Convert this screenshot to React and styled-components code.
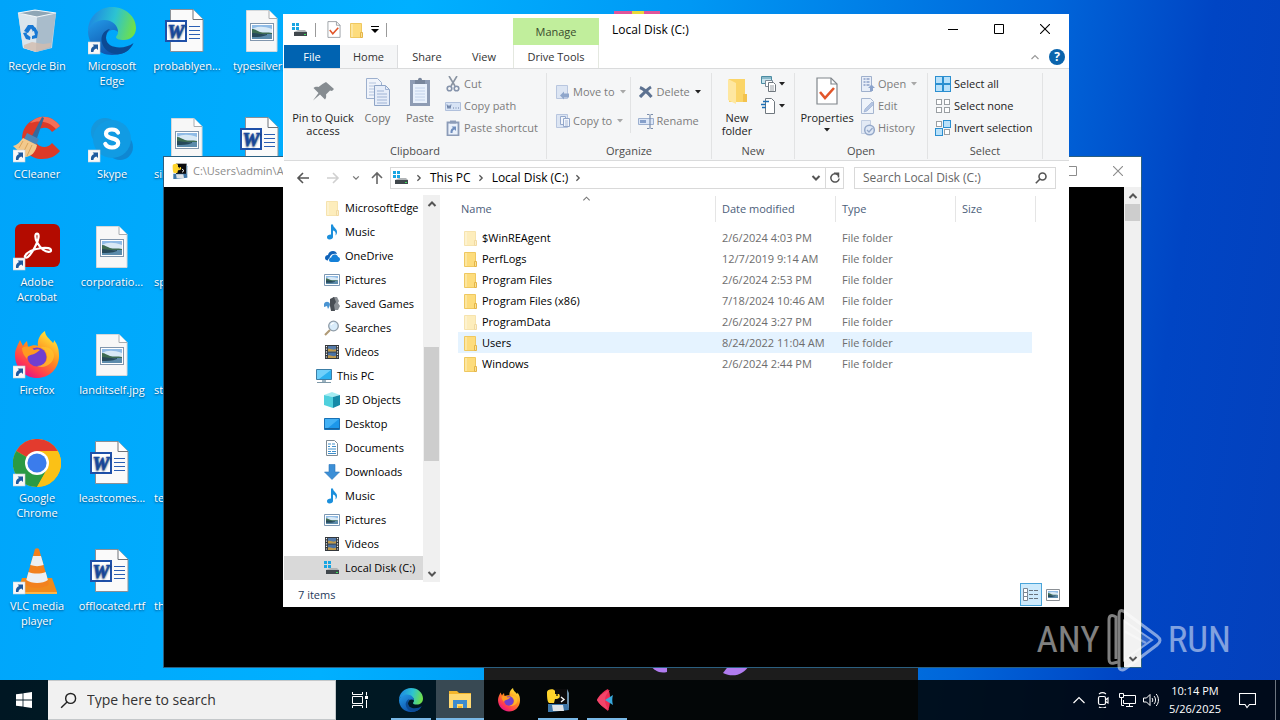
import React from "react";
import styled, { createGlobalStyle, css } from "styled-components";

const GlobalStyle = createGlobalStyle`
  *, *::before, *::after { box-sizing: border-box; }
  body {
    margin: 0;
    font-family: "Open Sans", "Noto Sans", sans-serif;
    font-size: 11px;
    line-height: 16px;
    color: #000;
  }
  button, input {
    font: inherit;
    color: inherit;
    border: 0;
    padding: 0;
    margin: 0;
    background: none;
    border-radius: 0;
  }
  svg { display: block; flex: none; }
`;

/* ---------- icons ---------- */

const Svg = ({ w = 16, h = w, box, children }) => (
  <svg width={w} height={h} viewBox={box || `0 0 ${w} ${h}`} fill="none" aria-hidden="true">
    {children}
  </svg>
);

const ShortcutBadge = () => (
  <g>
    <rect x="0" y="35" width="12" height="12" fill="#f8f8f8" stroke="#c8d0d8" strokeWidth=".6" />
    <path d="M3 45c-.4-3 .5-5 3-6l-1.400-1.600H10v5.600l-1.600-1.600C6.600 42 5.600 43 5.400 45z" fill="#1f5a9e" />
  </g>
);

const RecycleBinIcon = () => (
  <Svg w={48}>
    <path d="M5 6 22 3l21 3-4 35-16 4-13-4z" fill="#c3d3df" />
    <path d="M5 6l19 4-1 35-13-4z" fill="#dbe5ec" />
    <path d="M24 10l19-4-5 35-15 4z" fill="#a9bccb" />
    <path d="M5 6 22 3l21 3-19 4z" fill="#8fa6b6" stroke="#f2f6f9" strokeWidth="1.200" />
    <path d="M11 38l8-3 11 2 8-1-1 4-14 5-12-4z" fill="#d2bcae" opacity=".8" />
    <g fill="#1778d4">
      <path d="m11 24 4-6h5l3 4-3 2-2-2.500-3 4.500z" />
      <path d="m22 20 3 5-1 6-5 1 0-3 3-1-1-4-2 .5z" />
      <path d="m17 33-4-1-3-6 5-1-1.500 2 4 3z" />
    </g>
  </Svg>
);

const EdgeMark = () => (
  <g>
    <defs>
      <linearGradient id="edgeTop" x1="4" y1="10" x2="46" y2="22" gradientUnits="userSpaceOnUse">
        <stop stopColor="#1f8ee0" /><stop offset=".5" stopColor="#2cc3d2" /><stop offset="1" stopColor="#6fe04a" />
      </linearGradient>
      <linearGradient id="edgeLow" x1="4" y1="16" x2="20" y2="46" gradientUnits="userSpaceOnUse">
        <stop stopColor="#2193e2" /><stop offset="1" stopColor="#0f56ae" />
      </linearGradient>
    </defs>
    <path d="M0 24C0 10 11 0 24 0c14 0 24 10 24 21 0 8-6 12-12 12-5 0-8-1-8-3 0-1 2-2 2-5 0-5-5-10-13-10C9 15 2 18 0 24z" fill="url(#edgeTop)" />
    <path d="M0 24c2-6 8-11 16-11 9 0 14 6 14 12-4-4-12-2-12 6 0 8 7 12 14 12 5 0 9-2 12-5-4 7-11 10-20 10C10 48 0 37 0 24z" fill="url(#edgeLow)" />
    <path d="M18 31c0-4 1.500-7 4-9-6 1-10 7-8 14 2 7 9 12 18 11 6-1 11-5 13.500-11-9 7-27 6-27.500-5z" fill="#0b4a94" />
  </g>
);

const EdgeIcon = ({ size = 48, shortcut }) => (
  <Svg w={size} box="0 0 48 48"><EdgeMark />{shortcut && <ShortcutBadge />}</Svg>
);

const FirefoxIcon = ({ size = 48, shortcut }) => (
  <Svg w={size} box="0 0 48 48">
    <defs>
      <linearGradient id="fox" x1="40" y1="4" x2="12" y2="44" gradientUnits="userSpaceOnUse">
        <stop stopColor="#ffe83a" /><stop offset=".45" stopColor="#ff8a1e" /><stop offset=".8" stopColor="#ff3a52" /><stop offset="1" stopColor="#e31587" />
      </linearGradient>
    </defs>
    <path d="M2 24C2 18 5 14 7 9l3 6c1-2 2-3 4-5l1 6c4-2 8-2 10-1-1-6 2-12 7-15 0 5 5 8 8 12 1-1 1-2 1-3 4 5 5 10 5 16 0 13-10 22-22 22S2 37 2 24z" fill="url(#fox)" />
    <circle cx="24" cy="26" r="9.500" fill="#6f3fd0" />
    <path d="M9 17c5-3 9-1 12 2 3-1 5-1 6 0-2 1-3 3-6 4-4 1-7 2-7 5-3-3-5-7-5-11z" fill="#ff9a20" />
    <path d="M27 16c5 2 8 6 7 12-1 4-5 7-10 7 8 3 16-2 17-10 0-6-5-10-14-9z" fill="#ffc52e" opacity=".7" />
    {shortcut && <ShortcutBadge />}
  </Svg>
);

const CCleanerIcon = () => (
  <Svg w={48}>
    <path d="M47 11C41 3 32 0 24 3 14 7 9 14 9 24c0 12 9 20 20 20 8 0 14-3 18-8l-8-8c-3 4-8 5-12 3-4-2-5-6-5-9 0-6 4-9 8-9 4-1 7 1 9 4z" fill="#dc3a27" />
    <path d="M24 3c8-3 17 0 23 8l-4 3C36 6 26 5 17 8c2-2 4-4 7-5z" fill="#f37058" />
    <path d="m29 2 2 1-8 23-5-3z" fill="#35699b" />
    <path d="m14 18 12 6-3 6-12-6z" fill="#4b86b8" />
    <path d="M10 23l14 7c-1 7-6 12-12 12L0 31c4-1 7-4 10-8z" fill="#f2c98c" />
    <path d="m10 26-4 7m9-5-5 10m9-8-5 11" stroke="#d8a45c" />
    <ShortcutBadge />
  </Svg>
);

const SkypeIcon = () => (
  <Svg w={48}>
    <circle cx="17" cy="17" r="14" fill="#1597dc" />
    <circle cx="32" cy="32" r="13" fill="#0f87d2" />
    <circle cx="24" cy="24" r="19" fill="#119be3" />
    <path d="M30 17.500c-1-2.200-3.500-3-6-3-3.500 0-6 1.500-6 4.300 0 6.200 12.200 3 12.200 9.200 0 2.900-2.700 4.500-6.200 4.500-3 0-5.600-1.200-6.700-3.600" stroke="#fff" strokeWidth="4.200" strokeLinecap="round" />
    <ShortcutBadge />
  </Svg>
);

const AcrobatIcon = () => (
  <Svg w={48}>
    <rect x="2" y="1" width="45" height="43" rx="6" fill="#b30b00" />
    <path d="M12 33c2-4 9-7 17-8 5-.6 9 .3 9 2.400 0 2.200-4 2.200-8-.8-5-4-8-10-7.600-14 .3-2.600 3-2.600 3.200.2.400 5-6.600 18-10.600 21-1.800 1.300-3.700.8-3-.8z" stroke="#fff" strokeWidth="2.200" strokeLinejoin="round" />
    <ShortcutBadge />
  </Svg>
);

const ChromeIcon = () => (
  <Svg w={48}>
    <circle cx="24" cy="24" r="24" fill="#fbc116" />
    <path d="M24 24 3.200 12A24 24 0 0 1 44.800 12z" fill="#e33b2e" />
    <path d="M24 24 3.200 12A24 24 0 0 0 24 48l10-18z" fill="#2a9a44" />
    <path d="M24 12h20.800A24 24 0 0 1 24 48l10.400-18z" fill="#fbc116" />
    <circle cx="24" cy="24" r="12" fill="#fff" />
    <circle cx="24" cy="24" r="9.600" fill="#3b7cec" />
    <ShortcutBadge />
  </Svg>
);

const VlcIcon = () => (
  <Svg w={48}>
    <path d="M9 31h30l5 14c0 1-1 2-2 2H6c-1 0-2-1-2-2z" fill="#f08a1c" />
    <path d="M4 45h40v2H4z" fill="#ffb545" />
    <path d="M22 2c1-1 3-1 4 0l10 35c-4 5-20 5-24 0z" fill="#f2811d" />
    <path d="m20 9 8 0 2.600 9c-4 1.500-9 1.500-13.200 0zM15.500 25c5 2 12 2 17.200 0l2.200 8c-5 4-16.500 4-21.600 0z" fill="#eceff2" />
    <ShortcutBadge />
  </Svg>
);

const WordDocIcon = () => (
  <Svg w={48}>
    <path d="M7.500 2.500H30l10 10v32H7.500z" fill="#fafafa" stroke="#8c9096" />
    <path d="M30 2.500v10h10" fill="#fff" stroke="#6f7378" />
    <path d="M26 19.500h11M26 23.500h11M26 27.500h11M26 31.500h11" stroke="#2b5fb4" />
    <rect x="3" y="14" width="20" height="20" fill="#fff" stroke="#1f50a8" strokeWidth="2" />
    <text x="13" y="31" textAnchor="middle" fill="#1f50a8" stroke="#1f50a8" strokeWidth=".6" fontSize="19" fontWeight="700" fontStyle="italic" fontFamily="Liberation Serif, serif">W</text>
  </Svg>
);

const Landscape = ({ x, y, w, h }) => (
  <svg x={x} y={y} width={w} height={h} viewBox="0 0 20 14" preserveAspectRatio="none">
    <rect width="20" height="14" fill="#8fbbe6" />
    <path d="M0 4c5-3 12-3 20 0v4H0z" fill="#d8e9f6" />
    <path d="M0 4c3 0 5 2 8 3s8 0 12 1v1H0z" fill="#3d6b52" />
    <path d="M0 9h20v5H0z" fill="#5c8bab" />
    <path d="M0 8c5 0 10 2 15 1v1c-5 2-10 2-15 2z" fill="#27495a" />
  </svg>
);

const ImageDocIcon = () => (
  <Svg w={48}>
    <path d="M8.500 3.500H31l8 8v33H8.500z" fill="#f7f7f7" stroke="#d4d8db" />
    <path d="M31 3.500v8h8" fill="#fff" stroke="#a8acb0" />
    <rect x="12.500" y="16.500" width="23" height="17" fill="#fff" stroke="#8196ad" />
    <Landscape x={14} y={18} w={20} h={14} />
  </Svg>
);

const DriveIcon = () => (
  <Svg>
    <path d="M0 1h3v3H0zM4 1h3v3H4zM0 5h3v3H0zM4 5h3v3H4z" fill="#18a5e2" />
    <path d="m4 9 2-1h7l2 2H2z" fill="#b0b4b6" />
    <path d="M2 10h13v4H2z" fill="#40474c" />
    <path d="M12 12h2v1h-2z" fill="#39e05a" />
  </Svg>
);

const FolderIcon = ({ faded }) => (
  <Svg>
    <g opacity={faded ? 0.5 : 1}>
      <path d="M2.500 1.500h11v14h-11z" fill="#fddc7c" stroke="#efc860" />
      <path d="M3 2h2v13H3z" fill="#fce6a0" />
      <path d="M12.500 10.500h2v5h-2z" fill="#fbe294" stroke="#e5b548" />
    </g>
  </Svg>
);

const CheckDocIcon = ({ w = 14, h = 17 }) => (
  <Svg w={w} h={h} box="0 0 22 28">
    <path d="M1 1h14l6 6v20H1z" fill="#fff" stroke="#80868c" strokeWidth="1.200" />
    <path d="M15 1v6h6" stroke="#80868c" strokeWidth="1.200" />
    <path d="m4 15 5 6 9-10" stroke="#e2552a" strokeWidth="2.600" />
  </Svg>
);

const PinIcon = () => (
  <Svg w={24} h={28}>
    <path d="m15 5 8 7-2 2-2-.5-4 4c.5 2 0 4-1 5l-5-5-7 6 5.500-7.500-5-5c1-1 3-1.500 5-1l4-3z" fill="#868c91" />
  </Svg>
);

const CopyIcon = () => (
  <Svg w={26} h={30}>
    <path d="M1.500 1.500h11l4 4v16h-15z" fill="#f0f4fb" stroke="#9db0ce" />
    <path d="M4 6h7M4 9h9M4 12h9M4 15h9M4 18h9" stroke="#b4c4de" />
    <path d="M9.500 8.500h11l4 4v16h-15z" fill="#e6edf9" stroke="#8ea4c6" />
    <path d="M20.500 8.500v4h4M12 14h7M12 17h10M12 20h10M12 23h10M12 26h10" stroke="#9fb3d4" />
  </Svg>
);

const PasteIcon = () => (
  <Svg w={22} h={30}>
    <path d="M1 3h20v26H1z" fill="#8e9cb4" />
    <path d="M4 7h14v19H4z" fill="#e9f1fc" />
    <path d="M6 3h3c0-3 4-3 4 0h3v4H6z" fill="#78869c" />
    <path d="M6 11h10M6 14h10M6 17h10M6 20h10M6 23h10" stroke="#c2d2ea" />
  </Svg>
);

const CutIcon = () => (
  <Svg>
    <path d="m4 0 6 10M12 0l-6 10" stroke="#8a94a2" strokeWidth="1.600" />
    <circle cx="4.500" cy="12.500" r="2.300" stroke="#8593ab" strokeWidth="1.600" />
    <circle cx="11.500" cy="12.500" r="2.300" stroke="#8593ab" strokeWidth="1.600" />
  </Svg>
);

const CopyPathIcon = () => (
  <Svg>
    <path d="M.5 4.500h15v8H.5z" fill="#d7e3f5" stroke="#b0c0dc" />
    <path d="m2 6.500 1 4 1-3 1 3 1-4M8 10h1M10.500 10h1M13 10h1" stroke="#6a7fa5" />
  </Svg>
);

const PasteShortcutIcon = () => (
  <Svg>
    <path d="M2.500 2.500h11v13h-11z" fill="#eaf1fb" stroke="#8c9cb8" strokeWidth="1.800" />
    <path d="M5 .5h6v3H5z" fill="#8c9cb8" />
    <path d="M5.500 13c-.3-3 1-4.500 2.500-5L6.600 6.500H11V11L9.500 9.500C8 10 7.500 11 7.500 13z" fill="#6f8dbd" />
  </Svg>
);

const MoveToIcon = () => (
  <Svg w={14} h={16}>
    <path d="M.5 1.500h11v13H.5z" fill="#dce5f3" stroke="#b8c6df" />
    <path d="M8 9.500v-2l-4 4 4 4v-2h5v-4z" fill="#8fa6cb" />
  </Svg>
);

const CopyToIcon = () => (
  <Svg w={14} h={16}>
    <path d="M.5 1.500h11v13H.5z" fill="#dce5f3" stroke="#b8c6df" />
    <path d="M4.500 3.500h5v8h-5z" fill="#f3f6fb" stroke="#94a8cb" />
    <path d="M7.500 5.500h6v8h-6z" fill="#f3f6fb" stroke="#94a8cb" />
    <path d="M9 8h3M9 10h3M9 12h3" stroke="#a9bad8" />
  </Svg>
);

const DeleteIcon = () => (
  <Svg><path d="M2 3.500C6 5 11 10 13.500 13M13 3C9.500 5 5 10 2 13" stroke="#5d7291" strokeWidth="3" /></Svg>
);

const RenameIcon = () => (
  <Svg>
    <path d="M.5 5.500h15v6H.5z" fill="#dbe6f7" stroke="#9db0cf" />
    <path d="M2 7h6v3H2z" fill="#86a0ca" />
    <path d="M9 1.500h2.500M12.500 1.500H15M12 2v13M9 15.500h2.500M12.500 15.500H15" stroke="#7a8dab" strokeWidth="1.200" />
  </Svg>
);

const NewFolderIcon = () => (
  <Svg w={22} h={28}>
    <path d="M3 2h16v15h2v8H3z" fill="#fbd568" />
    <path d="M2 2l8 4v21l-8-4z" fill="#fee7a0" />
    <path d="M17 17h4v8h-4z" fill="#f3c24d" />
  </Svg>
);

const NewItemIcon = () => (
  <Svg w={16} box="0 0 16 16">
    <path d="M.5.500h10v7h-10z" fill="#c7e4ee" stroke="#4b8ca3" />
    <path d="M1 2h9" stroke="#4b8ca3" />
    <path d="M4.500 4.500h7v6h-7z" fill="#fff" stroke="#7b8a96" />
    <path d="M7.500 6.500h5l2 2v7h-7z" fill="#fff" stroke="#6f777e" />
    <path d="M9 10h4M9 12h4M9 14h4" stroke="#9aa1a7" />
  </Svg>
);

const EasyAccessIcon = () => (
  <Svg w={16}>
    <path d="M4.500.5h6l3 3v12h-9z" fill="#fff" stroke="#6f777e" />
    <path d="M2 3.500h6M0 6.500h5M1 9.500h4" stroke="#1d6fb5" strokeWidth="1.400" />
  </Svg>
);

const OpenIcon = () => (
  <Svg w={14} h={16}>
    <path d="M.5.500h10v15H.5z" fill="#e8eef8" stroke="#9fb0cc" />
    <path d="M2.500 3h2m1 0h3m-6 3h2m1 0h3m-6 3h2m1 0h3" stroke="#8ba0c6" strokeWidth="1.400" />
    <path d="M9 15v-3H7l3.500-3.500L14 12h-2v3z" fill="#8ba3cb" />
  </Svg>
);

const EditIcon = () => (
  <Svg w={14} h={16}>
    <path d="M.5.500h9l3 3v12H.5z" fill="#eef3fa" stroke="#a6b6d0" />
    <path d="m3 14 1-3 7-7 2 2-7 7z" fill="#b4c5e2" stroke="#93a8cc" strokeWidth=".6" />
  </Svg>
);

const HistoryIcon = () => (
  <Svg w={14} h={16}>
    <path d="M.5.500h9v13H.5z" fill="#e3eaf5" stroke="#c2cee2" />
    <circle cx="8.500" cy="10" r="4.800" fill="#dfe8f6" stroke="#94a8c9" strokeWidth="1.500" />
    <path d="m6 10 2 2 3.500-4" stroke="#94a8c9" strokeWidth="1.300" />
  </Svg>
);

const SelectIcon = ({ on }) => (
  <Svg>
    {[[0, 0], [8, 0], [0, 8], [8, 8]].map(([x, y], i) =>
      on[i] ? (
        <rect key={i} x={x + 0.5} y={y + 0.5} width="7" height="7" fill="#b9e1fa" stroke="#2b8fd0" />
      ) : (
        <rect key={i} x={x + 1.5} y={y + 1.5} width="5" height="5" fill="#fff" stroke="#9a9fa3" />
      )
    )}
  </Svg>
);

const MusicIcon = () => (
  <Svg>
    <path d="M7 .5h2c0 3 4 4 4 7.500 0 1.500-.5 2.500-1.500 3.500.8-3-.5-4.500-2.500-5v6.500c0 1.500-1.500 2.500-3.500 2.500S3 14.500 3 13s1.500-2.500 4-2.500z" fill="#1b8fdc" />
  </Svg>
);

const OneDriveIcon = () => (
  <Svg>
    <path d="M1 10c0-2 1.500-3 3-3 .5-2.500 2.500-4 5-4 2 0 3.500 1 4 3-4-1-7 1-7.500 4-.8.500-1.500 1.500-1.500 2.500C2 12.500 1 11.500 1 10z" fill="#0f62b8" />
    <path d="M5 12c0-1.500 1-2.500 2.200-2.500C7.700 7.500 9 6.500 10.800 6.500c1.700 0 3 1 3.200 2.500 1.200.1 2 1 2 2.300S15 14 13.500 14H7c-1.200 0-2-.8-2-2z" fill="#1480d8" />
  </Svg>
);

const PicturesIcon = () => (
  <Svg>
    <path d="M.5 2.500h15v11H.5z" fill="#fff" stroke="#7c97b3" />
    <Landscape x={2} y={4} w={12} h={8} />
  </Svg>
);

const GamesIcon = () => (
  <Svg>
    <path d="M9 1h4l2 4-1 2 2 3-2 4H9z" fill="#8b9095" />
    <path d="m6 3 4-2 2 5-2 3 1 6-4 0-1-5z" fill="#494e54" />
    <path d="M0 8c1-3 5-3 6 0 0 2-1 3-2 5l-1-3-3 1z" fill="#4a94d2" />
  </Svg>
);

const SearchesIcon = () => (
  <Svg>
    <path d="m1 15 5-5" stroke="#b09a76" strokeWidth="2.200" />
    <circle cx="9.500" cy="6" r="4.800" fill="#d9ecfa" stroke="#8f9ca8" strokeWidth="1.300" />
    <path d="M7 5c.5-1.500 1.500-2 3-2" stroke="#fff" strokeWidth="1.200" />
  </Svg>
);

const VideosIcon = () => (
  <Svg>
    <path d="M1 1h14v14H1z" fill="#33373b" />
    <path d="M4 2h8v5.500H4z" fill="#557aa8" />
    <path d="M4 8.500h8V14H4z" fill="#4a72a5" />
    <path d="M4 5c3-1 5 2 8 0v2.500H4zM4 11.500c3-1 5 2 8 0V14H4z" fill="#c29a49" />
    <path d="M2.500 2v13M13.500 2v13" stroke="#f2f2f2" strokeWidth="1.200" strokeDasharray="1.200 1.400" />
  </Svg>
);

const ThisPcIcon = () => (
  <Svg>
    <path d="M.5 1.500h15v10H.5z" fill="#2bb1ef" stroke="#3c7ea6" />
    <path d="M1 2h14L3 11H1z" fill="#6fd0fa" />
    <path d="M6 12h4v2H6z" fill="#9db3c0" />
    <path d="M1 14.500h14" stroke="#7d98a8" />
  </Svg>
);

const CubeIcon = () => (
  <Svg>
    <path d="m8 0 8 3-7 2-9-2z" fill="#a4ecf2" />
    <path d="m0 3 9 2v11l-9-3z" fill="#4fd0dd" />
    <path d="m9 5 7-2v10l-7 3z" fill="#158aa8" />
  </Svg>
);

const DesktopFolderIcon = () => (
  <Svg>
    <path d="M.5 2.500h15v11H.5z" fill="#1c97ea" stroke="#1871b5" />
    <path d="M1 3h14L4 12H1z" fill="#43b2f6" />
    <path d="M1 12.500h14" stroke="#17639f" />
  </Svg>
);

const DocumentsIcon = () => (
  <Svg>
    <path d="M2.500.5h8l3 3v12h-11z" fill="#fff" stroke="#7f8b94" />
    <path d="M4 4h3m1 0h3M4 6.500h2m2 0h4M4 9h8M4 11.500h3m1 0h4M4 13.500h8" stroke="#3f8fcb" />
  </Svg>
);

const DownloadsIcon = () => (
  <Svg><path d="M5 .5h6V8h4.500L8 15.500.500 8H5z" fill="#3c8fd6" stroke="#2b76ba" strokeWidth=".6" /></Svg>
);

const Chevron = ({ d = "down", color = "#555", size = 10, sw = 1.6 }) => {
  const rot = { down: 0, up: 180, right: -90, left: 90 }[d];
  return (
    <Svg w={size} box="0 0 10 10">
      <path d="m1.500 3 3.500 3.500L8.500 3" transform={`rotate(${rot} 5 5)`} stroke={color} strokeWidth={sw} />
    </Svg>
  );
};

const Caret = ({ color = "#222" }) => (
  <Svg w={6} h={4}><path d="M0 0h6L3 3.500z" fill={color} /></Svg>
);

const CustomizeIcon = () => (
  <Svg w={8} h={8}><path d="M0 .5h8" stroke="#000" /><path d="M0 3h8L4 7z" fill="#000" /></Svg>
);

const ArrowIcon = ({ d, color }) => (
  <Svg w={14} box="0 0 14 14">
    <path d="M13 7H2m5-5L2 7l5 5" transform={`rotate(${{ left: 0, right: 180, up: 90 }[d]} 7 7)`} stroke={color} strokeWidth="1.600" />
  </Svg>
);

const RefreshIcon = () => (
  <Svg w={12}><path d="M9.500 3.500A4.200 4.200 0 1 0 10.200 6.500M5 1.200h4.500V5.500" stroke="#555" strokeWidth="1.500" /></Svg>
);

const MagnifierIcon = ({ size = 12, color = "#555", sw = 1.6 }) => (
  <Svg w={size} box="0 0 12 12">
    <circle cx="7.500" cy="4.500" r="3.500" stroke={color} strokeWidth={sw} />
    <path d="M5 7 .800 11.200" stroke={color} strokeWidth={sw} />
  </Svg>
);

const MinimizeIcon = () => <Svg w={10}><path d="M0 5.500h10" stroke="currentColor" /></Svg>;
const MaximizeIcon = () => <Svg w={10}><path d="M.5.500h9v9h-9z" stroke="currentColor" /></Svg>;
const CloseIcon = () => <Svg w={10}><path d="m0 0 10 10m0-10L0 10" stroke="currentColor" strokeWidth="1.100" /></Svg>;

const PythonConsoleIcon = ({ size = 16 }) => (
  <Svg w={size} box="0 0 24 24">
    <path d="M6 1h16v16H6z" fill="#0b0b0d" />
    <path d="M21 1v16l2 5V5z" fill="#6c8ea8" />
    <path d="m15 9 3 2.500-3 2.500" stroke="#fff" strokeWidth="1.400" />
    <path d="M2 16h20l1 6-18 2H2z" fill="#3e76a8" />
    <path d="M6 17h11l1 6H7z" fill="#dfe3e7" />
    <path d="M1 4c0-3 7-4 8-1v3h4c2 3 0 5-4 5l-1 4H3c-2-1-2-8-2-11z" fill="#ffd42b" />
    <circle cx="11" cy="7" r="1" fill="#2b2b1a" />
  </Svg>
);

const ExplorerTaskIcon = () => (
  <Svg w={24}>
    <path d="M1 3h8l2 2h12v15H1z" fill="#f3b52c" />
    <path d="M1 6h22v14H1z" fill="#ffd972" />
    <path d="M5 12h14v8h-4v-4H9v4H5z" fill="#3f8ccd" />
    <path d="M10 18h4v2h-4z" fill="#f3b52c" />
  </Svg>
);

const KiteIcon = () => (
  <Svg w={24}>
    <path d="M13 1c2 4 2 6 2 11s-1 8-2 11C9 20 4 16 2 12 4 7 9 3 13 1z" fill="#ee2c54" />
    <path d="M15 2c-3 3-5 6-5 10s2 8 4 10C9 20 4 16 2 12 4 8 9 4 15 2z" fill="#f2456a" />
    <path d="m10 12 8-5c-1 3-1 7 0 10z" fill="#38a8dc" />
  </Svg>
);

const WindowsLogo = () => (
  <Svg w={16}><path d="M0 2.300 6.600 1.400v6.200H0zM7.400 1.300 16 0v7.600H7.400zM0 8.400h6.600v6.200L0 13.700zM7.400 8.400H16V16l-8.600-1.300z" fill="#fff" /></Svg>
);

const TaskViewIcon = () => (
  <Svg w={16}>
    <path d="M.5 0v2.500h10V0M.5 16v-2.500h10V16M.5 4.500h10v7H.5zM14.500 0v3.500M14.500 8v8" stroke="#fff" />
    <path d="M13 4h3v3h-3z" fill="#fff" />
  </Svg>
);

const CameraTrayIcon = () => (
  <Svg w={14} h={16}>
    <rect x="2.500" y="4.500" width="7" height="8" rx="1.500" stroke="#fff" strokeWidth="1.200" />
    <path d="m9.500 8 2.500-2v5L9.500 9.500M3 2c2-1.500 5-1.500 7 0M3 15c2 1.300 5 1.300 7 0" stroke="#fff" strokeWidth="1.100" />
  </Svg>
);

const NetworkIcon = () => (
  <Svg w={17} h={16}>
    <path d="M5 3.500h11.500v8H4.500V8M10.500 12v3M7 14.500h7" stroke="#fff" />
    <path d="M.5 1.500h4v4h-4zM2.500 6v7.500H5" stroke="#fff" />
  </Svg>
);

const SpeakerIcon = () => (
  <Svg w={17} h={16}>
    <path d="M.5 6h3L7 2.500v11L3.500 10H.5z" stroke="#fff" />
    <path d="M9 6c1 1.200 1 3 0 4M11 4c2 2.200 2 6 0 8M13.200 2c3 3.500 3 8.500 0 12" stroke="#fff" />
  </Svg>
);

const NotificationIcon = () => (
  <Svg w={17} h={17}><path d="M.5 1.500h16v11h-6l-2.500 3-2-3H.5z" stroke="#fff" strokeWidth="1.100" /></Svg>
);

const DetailsViewIcon = () => (
  <Svg w={16} h={14}>
    <path d="M.5.500h4v4h-4zM.5 4.500h4v4h-4zM.5 8.500h4v4h-4z" fill="#fff" stroke="#7b8794" />
    <path d="M6 2.500h4m1 0h4M6 6.500h4m1 0h4M6 10.500h4m1 0h4" stroke="#68737d" />
  </Svg>
);

const IconsViewIcon = () => (
  <Svg w={14} h={12}>
    <path d="M.5.500h13v11H.5z" fill="#fff" stroke="#8a8f94" />
    <Landscape x={2} y={2} w={10} h={7} />
  </Svg>
);

/* ---------- desktop ---------- */

const Desktop = styled.main`
  position: relative;
  display: flex;
  flex-direction: column;
  min-height: 100vh;
  overflow: hidden;
  background: linear-gradient(98deg, #00a4fa 0%, #00b0ff 30%, #0098f4 50%, #0066da 76%, #0045c4 88%, #0440bc 100%);
`;

const IconGrid = styled.section`
  flex: 1;
  display: grid;
  grid-auto-flow: column;
  grid-template-rows: repeat(6, 108px);
  grid-auto-columns: 75px;
`;

const DesktopItem = styled.button`
  display: flex;
  flex-direction: column;
  align-items: center;
  gap: 3px;
  padding: 7px 1px 0 0;
  line-height: 15px;
  color: #fff;
  text-shadow: 0 1px 2px rgba(0, 30, 70, 0.7);
  span {
    max-width: 74px;
    ${(p) => p.$tucked && css`align-self: flex-start; padding-left: 4px;`}
  }
`;

const desktopItems = [
  ["Recycle Bin", RecycleBinIcon],
  ["CCleaner", CCleanerIcon],
  ["Adobe Acrobat", AcrobatIcon],
  ["Firefox", FirefoxIcon],
  ["Google Chrome", ChromeIcon],
  ["VLC media player", VlcIcon],
  ["Microsoft Edge", EdgeIcon],
  ["Skype", SkypeIcon],
  ["corporatio...", ImageDocIcon],
  ["landitself.jpg", ImageDocIcon],
  ["leastcomes...", WordDocIcon],
  ["offlocated.rtf", WordDocIcon],
  ["probablyen...", WordDocIcon],
  ["silv", ImageDocIcon, true],
  ["sp", ImageDocIcon, true],
  ["st", ImageDocIcon, true],
  ["te", WordDocIcon, true],
  ["th", WordDocIcon, true],
  ["typesilver...", ImageDocIcon],
  ["", WordDocIcon],
];

const Window = styled.section`
  position: absolute;
  display: flex;
  flex-direction: column;
`;

const CaptionButton = styled.button`
  display: grid;
  place-items: center;
  width: 46px;
  height: 30px;
`;

const BackgroundApp = styled(Window)`
  left: 484px;
  right: 362px;
  top: 160px;
  bottom: 0;
  align-items: center;
  justify-content: flex-end;
  padding-bottom: 44px;
  background: #1c1c1c;
`;

const PeekingIcon = styled.div`
  position: absolute;
  left: 612px;
  top: 11px;
`;

const ConsoleWindow = styled(Window)`
  left: 164px;
  right: 139px;
  top: 157px;
  bottom: 53px;
  background: #000;
  outline: 1px solid #2b5f80;
`;

const ConsoleTitle = styled.header`
  display: flex;
  align-items: center;
  height: 30px;
  padding: 0 0 2px 8px;
  gap: 5px;
  background: #fff;
  color: #8c8c8c;
  span { flex: 1; }
  button + button { margin-left: -5px; }
`;

const ConsoleBody = styled.div`
  flex: 1;
  display: flex;
  justify-content: flex-end;
`;

const Scrollbar = styled.div`
  display: flex;
  flex-direction: column;
  width: 17px;
  flex: none;
  background: #f0f0f0;
`;

const ScrollButton = styled.button`
  display: grid;
  place-items: center;
  height: 17px;
`;

const ScrollTrack = styled.div`
  flex: 1;
  padding: ${(p) => p.$offset || 0} 1px 0 1px;
`;

const ScrollThumb = styled.div`
  height: ${(p) => p.$size};
  background: #cdcdcd;
`;

/* ---------- explorer ---------- */

const ExplorerWindow = styled(Window)`
  left: 283px;
  right: 211px;
  top: 14px;
  bottom: 113px;
  padding-left: 1px;
  background: #fff;
`;

const TitleBar = styled.header`
  display: flex;
  height: 31px;
  flex: none;
  padding-right: 1px;
`;

const QuickAccess = styled.div`
  display: flex;
  align-items: center;
  width: 229px;
  padding-left: 8px;
  gap: 7px;
  button:first-of-type { margin-left: 4px; }
`;

const Divider = styled.i`
  width: 1px;
  height: 14px;
  background: #9a9a9a;
`;

const ContextTab = styled.div`
  display: grid;
  place-items: center;
  align-self: flex-end;
  width: 86px;
  height: 27px;
  background: #c1ee9c;
  color: #3a4b2c;
`;

const WindowTitle = styled.h1`
  flex: 1;
  margin: 0;
  padding-left: 13px;
  font-size: 12px;
  font-weight: 400;
  line-height: 32px;
`;

const TabRow = styled.div`
  display: flex;
  align-items: center;
  height: 23px;
  flex: none;
  padding-right: 4px;
`;

const Tab = styled.button`
  width: ${(p) => p.$w};
  height: 23px;
  color: #333;
  ${(p) => p.$kind === "file" && css`background: #0063b1; color: #fff;`}
  ${(p) => p.$kind === "active" && css`
    background: #f5f6f7;
    border: 1px solid #dcdddf;
    border-width: 0 1px 0 0;
  `}
  ${(p) => p.$kind === "context" && css`
    margin-left: 1px;
    border: 1px solid #e4e8e0;
    border-width: 0 1px;
  `}
`;

const TabTools = styled.div`
  flex: 1;
  display: flex;
  align-items: center;
  justify-content: flex-end;
  gap: 9px;
`;

const HelpButton = styled.button`
  width: 16px;
  height: 16px;
  border-radius: 50%;
  background: #0a64ad;
  color: #fff;
  font-size: 12px;
  font-weight: 700;
`;

const Ribbon = styled.div`
  display: flex;
  height: 93px;
  flex: none;
  padding: 4px 0 1px;
  background: #f5f6f7;
  border: 1px solid #dadbdc;
  border-width: 1px 0;
`;

const Group = styled.section`
  display: flex;
  flex-direction: column;
  width: ${(p) => p.$w};
  border-right: 1px solid #e2e3e4;
`;

const GroupBody = styled.div`
  flex: 1;
  display: flex;
  align-items: flex-start;
  padding: ${(p) => p.$pad || "0 6px"};
`;

const GroupLabel = styled.h2`
  margin: 0;
  font-size: 11px;
  font-weight: 400;
  line-height: 16px;
  text-align: center;
  color: #4c4c4c;
`;

const BigButton = styled.button`
  display: flex;
  flex-direction: column;
  align-items: center;
  width: ${(p) => p.$w};
  flex: none;
  padding-top: 4px;
  gap: 6px;
  line-height: 13px;
  color: ${(p) => (p.$off ? "#6d6d6d" : "#222")};
  svg[height="30"] { margin-bottom: -2px; }
  svg + span + svg { margin-top: -2px; }
`;

const CommandList = styled.div`
  display: flex;
  flex-direction: column;
  gap: ${(p) => p.$gap || "6px"};
  padding-left: ${(p) => p.$left || 0};
  padding-top: ${(p) => p.$top || "3px"};
`;

const Command = styled.button`
  display: flex;
  align-items: center;
  gap: 2px;
  height: 16px;
  white-space: nowrap;
  color: ${(p) => (p.$off ? "#7c7c7c" : "#222")};
  svg + span { padding-left: 1px; }
  svg + span + svg { margin-left: 3px; }
`;

const GroupRule = styled.i`
  width: 1px;
  height: 56px;
  margin: 4px 0 0 4px;
  background: #e2e3e4;
`;

const AddressRow = styled.div`
  display: flex;
  align-items: center;
  height: 34px;
  flex: none;
  padding: 0 13px 0 12px;
`;

const HistoryButtons = styled.div`
  display: flex;
  align-items: center;
  width: 94px;
  button:nth-child(2) { margin-left: 16px; }
  button:nth-child(3) { margin-left: 12px; }
  button:nth-child(4) { margin-left: 10px; }
`;

const AddressBox = styled.div`
  flex: 1;
  display: flex;
  align-items: center;
  height: 22px;
  border: 1px solid #d9d9d9;
  padding-left: 2px;
  font-size: 12px;
`;

const Crumbs = styled.nav`
  flex: 1;
  display: flex;
  align-items: center;
  gap: 6px;
  button { padding-left: 1px; }
`;

const AddressAction = styled.button`
  display: grid;
  place-items: center;
  width: 18px;
  height: 20px;
  & + & { border-left: 1px solid #d9d9d9; }
`;

const SearchBox = styled.label`
  display: flex;
  align-items: center;
  width: 202px;
  height: 22px;
  margin-left: 10px;
  padding: 0 8px;
  border: 1px solid #d9d9d9;
  font-size: 12px;
  input {
    flex: 1;
    min-width: 0;
    outline: 0;
  }
  input::placeholder { color: #666; opacity: 1; }
`;

const Content = styled.div`
  flex: 1;
  display: flex;
  min-height: 0;
  overflow: hidden;
`;

const NavPane = styled.nav`
  width: 139px;
  flex: none;
  padding-top: 1px;
  overflow: hidden;
`;

const NavItem = styled.button`
  display: flex;
  align-items: center;
  gap: 5px;
  width: 100%;
  height: 24px;
  padding-left: ${(p) => (p.$root ? "32px" : "40px")};
  white-space: nowrap;
  background: ${(p) => (p.$selected ? "#d9d9d9" : "none")};
`;

const navItems = [
  ["MicrosoftEdge", () => <FolderIcon faded />],
  ["Music", MusicIcon],
  ["OneDrive", OneDriveIcon],
  ["Pictures", PicturesIcon],
  ["Saved Games", GamesIcon],
  ["Searches", SearchesIcon],
  ["Videos", VideosIcon],
  ["This PC", ThisPcIcon, "root"],
  ["3D Objects", CubeIcon],
  ["Desktop", DesktopFolderIcon],
  ["Documents", DocumentsIcon],
  ["Downloads", DownloadsIcon],
  ["Music", MusicIcon],
  ["Pictures", PicturesIcon],
  ["Videos", VideosIcon],
  ["Local Disk (C:)", DriveIcon, "selected"],
];

const FileArea = styled.div`
  flex: 1;
  padding: 1px 0 0 18px;
  overflow: hidden;
`;

const FileTable = styled.table`
  width: 578px;
  table-layout: fixed;
  border-collapse: separate;
  border-spacing: 0;
  text-align: left;
`;

const HeadCell = styled.th`
  position: relative;
  width: ${(p) => p.$w};
  height: 26px;
  padding: 0 0 0 ${(p) => (p.$first ? "3px" : "6px")};
  border-right: 1px solid #e5e5e5;
  font-weight: 400;
  color: #4c607a;
  svg {
    position: absolute;
    top: -2px;
    left: calc(50% - 5px);
  }
`;

const Spacer = styled.tbody`
  td { height: 5px; padding: 0; }
`;

const FileRow = styled.tr`
  height: 21px;
  ${(p) => p.$hover && css`
    background: linear-gradient(#e5f3ff, #e5f3ff) no-repeat 0 0 / calc(100% - 4px) 100%;
  `}
  td { padding: 0 0 0 6px; color: #6d6d6d; }
  td:first-child { padding-left: 4px; color: #000; }
`;

const FileName = styled.span`
  display: flex;
  align-items: center;
  gap: 4px;
`;

const files = [
  ["$WinREAgent", "2/6/2024 4:03 PM", true],
  ["PerfLogs", "12/7/2019 9:14 AM"],
  ["Program Files", "2/6/2024 2:53 PM"],
  ["Program Files (x86)", "7/18/2024 10:46 AM"],
  ["ProgramData", "2/6/2024 3:27 PM", true],
  ["Users", "8/24/2022 11:04 AM"],
  ["Windows", "2/6/2024 2:44 PM"],
];

const StatusBar = styled.footer`
  display: flex;
  align-items: center;
  height: 25px;
  flex: none;
  padding: 0 5px 0 14px;
  color: #1e395b;
  span { flex: 1; }
`;

const ViewButton = styled.button`
  display: grid;
  place-items: center;
  width: 22px;
  height: 23px;
  ${(p) => p.$on && css`background: #cdeafc; border: 1px solid #4aa5da;`}
`;

/* ---------- taskbar ---------- */

const Taskbar = styled.footer`
  position: relative;
  display: flex;
  height: 40px;
  flex: none;
  background: rgba(0, 3, 5, 0.88);
  color: #fff;
`;

const TaskButton = styled.button`
  display: grid;
  place-items: center;
  width: ${(p) => p.$w || "48px"};
  height: 40px;
  flex: none;
  background: ${(p) => (p.$active ? "rgba(255, 255, 255, 0.22)" : "none")};
`;

const TaskSearch = styled.label`
  display: flex;
  align-items: center;
  gap: 10px;
  width: 288px;
  padding-left: 12px;
  background: #f1f1f1;
  border: 1px solid #c4c8ca;
  border-left: 0;
  font-size: 14px;
  input { flex: 1; min-width: 0; outline: 0; }
  input::placeholder { color: #333; opacity: 1; }
`;

const PinnedApps = styled.div`
  flex: 1;
  display: flex;
  gap: 1px;
  padding-left: 3px;
`;

const PinnedApp = styled(TaskButton)`
  position: relative;
  &::after {
    content: "";
    position: absolute;
    bottom: 0;
    left: ${(p) => (p.$active ? "0" : "4px")};
    right: ${(p) => (p.$active ? "0" : "4px")};
    height: ${(p) => (p.$running ? "2px" : "0")};
    background: #79b8e6;
  }
`;

const Clock = styled.time`
  display: flex;
  flex-direction: column;
  justify-content: center;
  width: 64px;
  text-align: center;
  line-height: 18px;
`;

const ShowDesktop = styled.button`
  width: 5px;
  margin-left: 7px;
  border-left: 1px solid #6d7680;
`;

const Watermark = styled.div`
  position: absolute;
  right: 49px;
  bottom: 48px;
  display: flex;
  align-items: center;
  gap: 6px;
  color: #fff;
  opacity: 0.5;
  font-family: "Roboto Condensed", "Liberation Sans Narrow", "Liberation Sans", sans-serif;
  font-size: 37px;
  line-height: 64px;
  pointer-events: none;
`;

const PlayMark = () => (
  <Svg w={56} h={64}>
    <path d="M12 54l-4 1c-3 1-5 0-5-4V12c0-4 2-6 7-3v42" stroke="#fff" strokeWidth="3" />
    <path d="M14 3c-1 1-1 3-1 5v50c0 4 3 5 6 3l32-24c4-3 4-6 0-9L20 5c-2-2-4-3-6-2z" stroke="#fff" strokeWidth="3" />
    <path d="M18 13l28 19-28 20z" fill="#fff" fillOpacity=".35" stroke="#fff" strokeWidth="2" />
    <path d="m18 23 22 12" stroke="#fff" strokeWidth="2" />
  </Svg>
);

/* ---------- composed parts ---------- */

const off = "#a8a8a8";

function RibbonPanel() {
  return (
    <Ribbon>
      <Group $w="263px">
        <GroupBody>
          <BigButton $w="66px"><PinIcon /><span>Pin to Quick access</span></BigButton>
          <BigButton $w="43px" $off><CopyIcon /><span>Copy</span></BigButton>
          <BigButton $w="42px" $off><PasteIcon /><span>Paste</span></BigButton>
          <CommandList $left="4px">
            <Command $off><CutIcon /><span>Cut</span></Command>
            <Command $off><CopyPathIcon /><span>Copy path</span></Command>
            <Command $off><PasteShortcutIcon /><span>Paste shortcut</span></Command>
          </CommandList>
        </GroupBody>
        <GroupLabel>Clipboard</GroupLabel>
      </Group>
      <Group $w="165px">
        <GroupBody $pad="0 0 0 9px">
          <CommandList $gap="13px" $top="11px">
            <Command $off><MoveToIcon /><span>Move to</span><Caret color={off} /></Command>
            <Command $off><CopyToIcon /><span>Copy to</span><Caret color={off} /></Command>
          </CommandList>
          <GroupRule />
          <CommandList $gap="13px" $top="11px" $left="7px">
            <Command $off><DeleteIcon /><span>Delete</span><Caret /></Command>
            <Command $off><RenameIcon /><span>Rename</span></Command>
          </CommandList>
        </GroupBody>
        <GroupLabel>Organize</GroupLabel>
      </Group>
      <Group $w="83px">
        <GroupBody $pad="0 4px">
          <BigButton $w="42px"><NewFolderIcon /><span>New folder</span></BigButton>
          <CommandList $left="3px">
            <Command aria-label="New item"><NewItemIcon /><Caret /></Command>
            <Command aria-label="Easy access"><EasyAccessIcon /><Caret /></Command>
          </CommandList>
        </GroupBody>
        <GroupLabel>New</GroupLabel>
      </Group>
      <Group $w="133px">
        <GroupBody $pad="0 4px">
          <BigButton $w="56px"><CheckDocIcon w={22} h={28} /><span>Properties</span><Caret /></BigButton>
          <CommandList $left="6px">
            <Command $off><OpenIcon /><span>Open</span><Caret color={off} /></Command>
            <Command $off><EditIcon /><span>Edit</span></Command>
            <Command $off><HistoryIcon /><span>History</span></Command>
          </CommandList>
        </GroupBody>
        <GroupLabel>Open</GroupLabel>
      </Group>
      <Group $w="115px">
        <GroupBody $pad="0 0 0 7px">
          <CommandList>
            <Command><SelectIcon on={[1, 1, 1, 1]} /><span>Select all</span></Command>
            <Command><SelectIcon on={[0, 0, 0, 0]} /><span>Select none</span></Command>
            <Command><SelectIcon on={[0, 1, 1, 0]} /><span>Invert selection</span></Command>
          </CommandList>
        </GroupBody>
        <GroupLabel>Select</GroupLabel>
      </Group>
    </Ribbon>
  );
}

function Explorer() {
  return (
    <ExplorerWindow aria-label="Local Disk (C:)">
      <TitleBar>
        <QuickAccess>
          <DriveIcon />
          <Divider />
          <button aria-label="Properties"><CheckDocIcon /></button>
          <button aria-label="New folder"><FolderIcon /></button>
          <button aria-label="Customize toolbar"><CustomizeIcon /></button>
          <Divider />
        </QuickAccess>
        <ContextTab>Manage</ContextTab>
        <WindowTitle>Local Disk (C:)</WindowTitle>
        <CaptionButton aria-label="Minimize"><MinimizeIcon /></CaptionButton>
        <CaptionButton aria-label="Maximize"><MaximizeIcon /></CaptionButton>
        <CaptionButton aria-label="Close"><CloseIcon /></CaptionButton>
      </TitleBar>
      <TabRow>
        <Tab $w="56px" $kind="file">File</Tab>
        <Tab $w="58px" $kind="active">Home</Tab>
        <Tab $w="58px">Share</Tab>
        <Tab $w="56px">View</Tab>
        <Tab $w="86px" $kind="context">Drive Tools</Tab>
        <TabTools>
          <button aria-label="Collapse ribbon"><Chevron d="up" color="#9a9a9a" sw={1.2} /></button>
          <HelpButton aria-label="Help">?</HelpButton>
        </TabTools>
      </TabRow>
      <RibbonPanel />
      <AddressRow>
        <HistoryButtons>
          <button aria-label="Back"><ArrowIcon d="left" color="#555" /></button>
          <button aria-label="Forward"><ArrowIcon d="right" color="#d0d0d0" /></button>
          <button aria-label="Recent"><Chevron size={8} color="#777" /></button>
          <button aria-label="Up"><ArrowIcon d="up" color="#666" /></button>
        </HistoryButtons>
        <AddressBox>
          <Crumbs aria-label="Path">
            <DriveIcon />
            <Chevron d="right" size={8} />
            <button>This PC</button>
            <Chevron d="right" size={8} />
            <button>Local Disk (C:)</button>
            <Chevron d="right" size={8} />
          </Crumbs>
          <AddressAction aria-label="Previous locations"><Chevron sw={2} /></AddressAction>
          <AddressAction aria-label="Refresh"><RefreshIcon /></AddressAction>
        </AddressBox>
        <SearchBox>
          <input type="text" aria-label="Search Local Disk (C:)" placeholder="Search Local Disk (C:)" />
          <MagnifierIcon />
        </SearchBox>
      </AddressRow>
      <Content>
        <NavPane aria-label="Folders">
          {navItems.map(([name, Icon, kind], i) => (
            <NavItem key={i} $root={kind === "root"} $selected={kind === "selected"}>
              <Icon />
              {name}
            </NavItem>
          ))}
        </NavPane>
        <Scrollbar>
          <ScrollButton aria-label="Scroll up"><Chevron d="up" sw={2} /></ScrollButton>
          <ScrollTrack $offset="135px"><ScrollThumb $size="114px" /></ScrollTrack>
          <ScrollButton aria-label="Scroll down"><Chevron sw={2} /></ScrollButton>
        </Scrollbar>
        <FileArea>
          <FileTable>
            <thead>
              <tr>
                <HeadCell $w="258px" $first>Name<Chevron d="up" size={9} color="#777" sw={1.2} /></HeadCell>
                <HeadCell $w="120px">Date modified</HeadCell>
                <HeadCell $w="120px">Type</HeadCell>
                <HeadCell $w="80px">Size</HeadCell>
              </tr>
            </thead>
            <Spacer><tr><td colSpan={4} /></tr></Spacer>
            <tbody>
              {files.map(([name, date, faded]) => (
                <FileRow key={name} $hover={name === "Users"}>
                  <td><FileName><FolderIcon faded={faded} />{name}</FileName></td>
                  <td>{date}</td>
                  <td>File folder</td>
                  <td />
                </FileRow>
              ))}
            </tbody>
          </FileTable>
        </FileArea>
      </Content>
      <StatusBar>
        <span>7 items</span>
        <ViewButton $on aria-label="Details view"><DetailsViewIcon /></ViewButton>
        <ViewButton aria-label="Large icons view"><IconsViewIcon /></ViewButton>
      </StatusBar>
    </ExplorerWindow>
  );
}

export default function App() {
  return (
    <Desktop>
      <GlobalStyle />
      <IconGrid aria-label="Desktop icons">
        {desktopItems.map(([name, Icon, tucked], i) => (
          <DesktopItem key={i} $tucked={tucked}>
            <Icon shortcut />
            <span>{name}</span>
          </DesktopItem>
        ))}
      </IconGrid>

      <PeekingIcon>
        <Svg w={48}>
          <path d="M2 0h46v14H2z" fill="#e0559a" />
          <path d="M20 0h12v14H20z" fill="#e8d83c" />
        </Svg>
      </PeekingIcon>

      <BackgroundApp aria-label="Background application">
        <Svg w={104} h={24}>
          <path d="M1 13h17v7C10 22 5 18 1 13z" fill="#b07cf0" />
          <path d="m74 21 7-9h20c-6 11-17 14-27 9z" fill="#b07cf0" />
        </Svg>
      </BackgroundApp>

      <ConsoleWindow aria-label="Console">
        <ConsoleTitle>
          <PythonConsoleIcon />
          <span>C:\Users\admin\A</span>
          <CaptionButton aria-label="Maximize"><MaximizeIcon /></CaptionButton>
          <CaptionButton aria-label="Close"><CloseIcon /></CaptionButton>
        </ConsoleTitle>
        <ConsoleBody>
          <Scrollbar>
            <ScrollButton aria-label="Scroll up"><Chevron d="up" sw={2} /></ScrollButton>
            <ScrollTrack><ScrollThumb $size="17px" /></ScrollTrack>
            <ScrollButton aria-label="Scroll down"><Chevron sw={2} /></ScrollButton>
          </Scrollbar>
        </ConsoleBody>
      </ConsoleWindow>

      <Explorer />

      <Taskbar>
        <TaskButton aria-label="Start"><WindowsLogo /></TaskButton>
        <TaskSearch>
          <MagnifierIcon size={17} color="#222" sw={1} />
          <input type="text" aria-label="Type here to search" placeholder="Type here to search" />
        </TaskSearch>
        <TaskButton aria-label="Task view"><TaskViewIcon /></TaskButton>
        <PinnedApps>
          <PinnedApp $running aria-label="Microsoft Edge"><EdgeIcon size={24} /></PinnedApp>
          <PinnedApp $running $active aria-label="File Explorer"><ExplorerTaskIcon /></PinnedApp>
          <PinnedApp aria-label="Firefox"><FirefoxIcon size={24} /></PinnedApp>
          <PinnedApp $running aria-label="Python"><PythonConsoleIcon size={24} /></PinnedApp>
          <PinnedApp $running aria-label="Kite"><KiteIcon /></PinnedApp>
        </PinnedApps>
        <TaskButton $w="24px" aria-label="Hidden icons"><Svg w={12} h={8}><path d="m.5 7 5.500-5.500L11.500 7" stroke="#fff" strokeWidth="1.200" /></Svg></TaskButton>
        <TaskButton $w="24px" aria-label="Camera"><CameraTrayIcon /></TaskButton>
        <TaskButton $w="24px" aria-label="Network"><NetworkIcon /></TaskButton>
        <TaskButton $w="24px" aria-label="Volume"><SpeakerIcon /></TaskButton>
        <Clock><span>10:14 PM</span><span>5/26/2025</span></Clock>
        <TaskButton $w="41px" aria-label="Notifications"><NotificationIcon /></TaskButton>
        <ShowDesktop aria-label="Show desktop" />
      </Taskbar>

      <Watermark aria-hidden="true"><span>ANY</span><PlayMark /><span>RUN</span></Watermark>
    </Desktop>
  );
}
